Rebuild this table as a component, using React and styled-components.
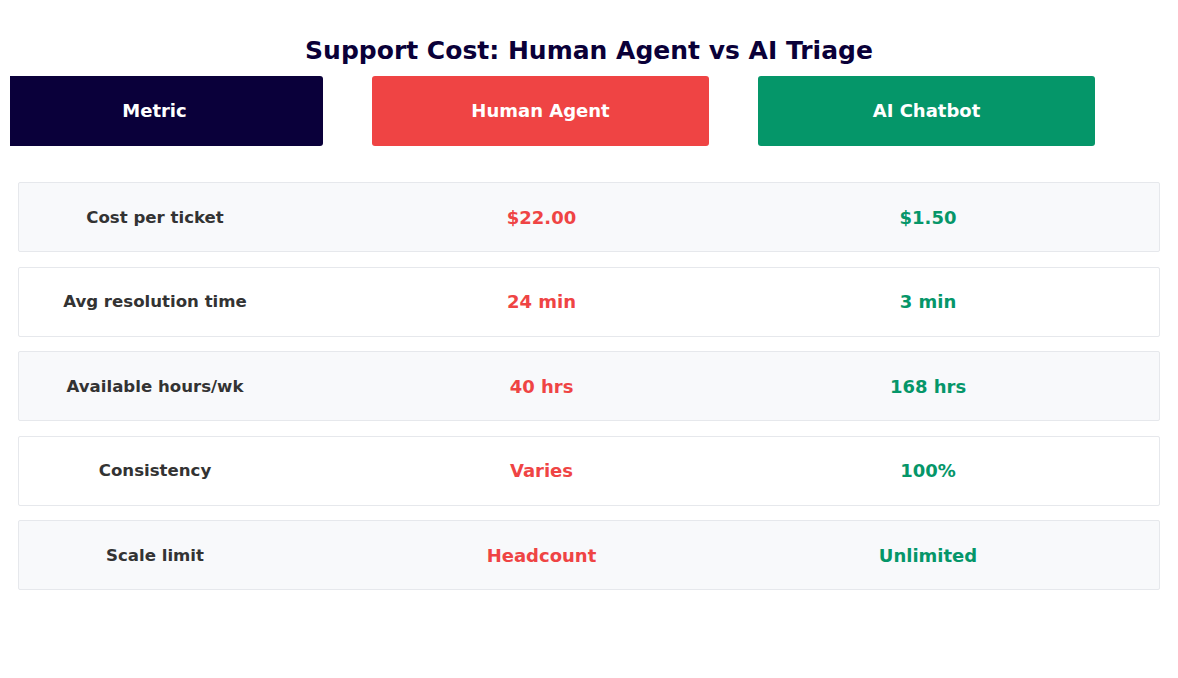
import React from 'react';
import styled, { createGlobalStyle } from 'styled-components';

const GlobalStyle = createGlobalStyle`
  html, body {
    margin: 0;
    padding: 0;
    background: #ffffff;
    font-family: "DejaVu Sans", "Liberation Sans", sans-serif;
  }
`;

const Page = styled.div`
  width: 1178px;
  height: 678px;
  overflow: hidden;
  background: #ffffff;
`;

const Title = styled.h1`
  margin: 0;
  padding-top: 37px;
  height: 28px;
  line-height: 28px;
  text-align: center;
  font-size: 25px;
  font-weight: bold;
  color: #0a0038;
`;

const HeaderStrip = styled.div`
  margin: 11px 0 0 10px;
  overflow: hidden;
  display: flex;
  gap: 49px;
`;

const HeaderCell = styled.div`
  flex: 0 0 337px;
  height: 70px;
  box-sizing: border-box;
  padding-bottom: 2px;
  border-radius: 3px;
  background: ${(p) => p.$bg};
  display: flex;
  align-items: center;
  justify-content: center;
  color: #ffffff;
  font-size: 18px;
  font-weight: bold;

  &:first-child {
    margin-left: -24px;
  }
`;

const Rows = styled.div`
  margin: 36px 18px 0;
  display: flex;
  flex-direction: column;
  gap: 14.6px;
`;

const Row = styled.div`
  height: 68px;
  display: grid;
  grid-template-columns: 272px 501px 272px 1fr;
  align-items: center;
  background: ${(p) => (p.$shaded ? '#f8f9fb' : '#ffffff')};
  border: 1px solid #e6e8ec;
  border-radius: 2px;
`;

const Label = styled.div`
  text-align: center;
  font-size: 16.6px;
  font-weight: bold;
  color: #333333;
`;

const Value = styled.div`
  text-align: center;
  font-size: 18px;
  font-weight: bold;
  color: ${(p) => p.$color};
`;

const RED = '#ef4444';
const GREEN = '#059669';

const data = [
  ['Cost per ticket', '$22.00', '$1.50'],
  ['Avg resolution time', '24 min', '3 min'],
  ['Available hours/wk', '40 hrs', '168 hrs'],
  ['Consistency', 'Varies', '100%'],
  ['Scale limit', 'Headcount', 'Unlimited'],
];

export default function App() {
  return (
    <Page>
      <GlobalStyle />
      <Title>Support Cost: Human Agent vs AI Triage</Title>
      <HeaderStrip>
        <HeaderCell $bg="#0a003a">Metric</HeaderCell>
        <HeaderCell $bg={RED}>Human Agent</HeaderCell>
        <HeaderCell $bg={GREEN}>AI Chatbot</HeaderCell>
      </HeaderStrip>
      <Rows>
        {data.map(([label, human, bot], i) => (
          <Row key={label} $shaded={i % 2 === 0}>
            <Label>{label}</Label>
            <Value $color={RED}>{human}</Value>
            <Value $color={GREEN}>{bot}</Value>
          </Row>
        ))}
      </Rows>
    </Page>
  );
}
